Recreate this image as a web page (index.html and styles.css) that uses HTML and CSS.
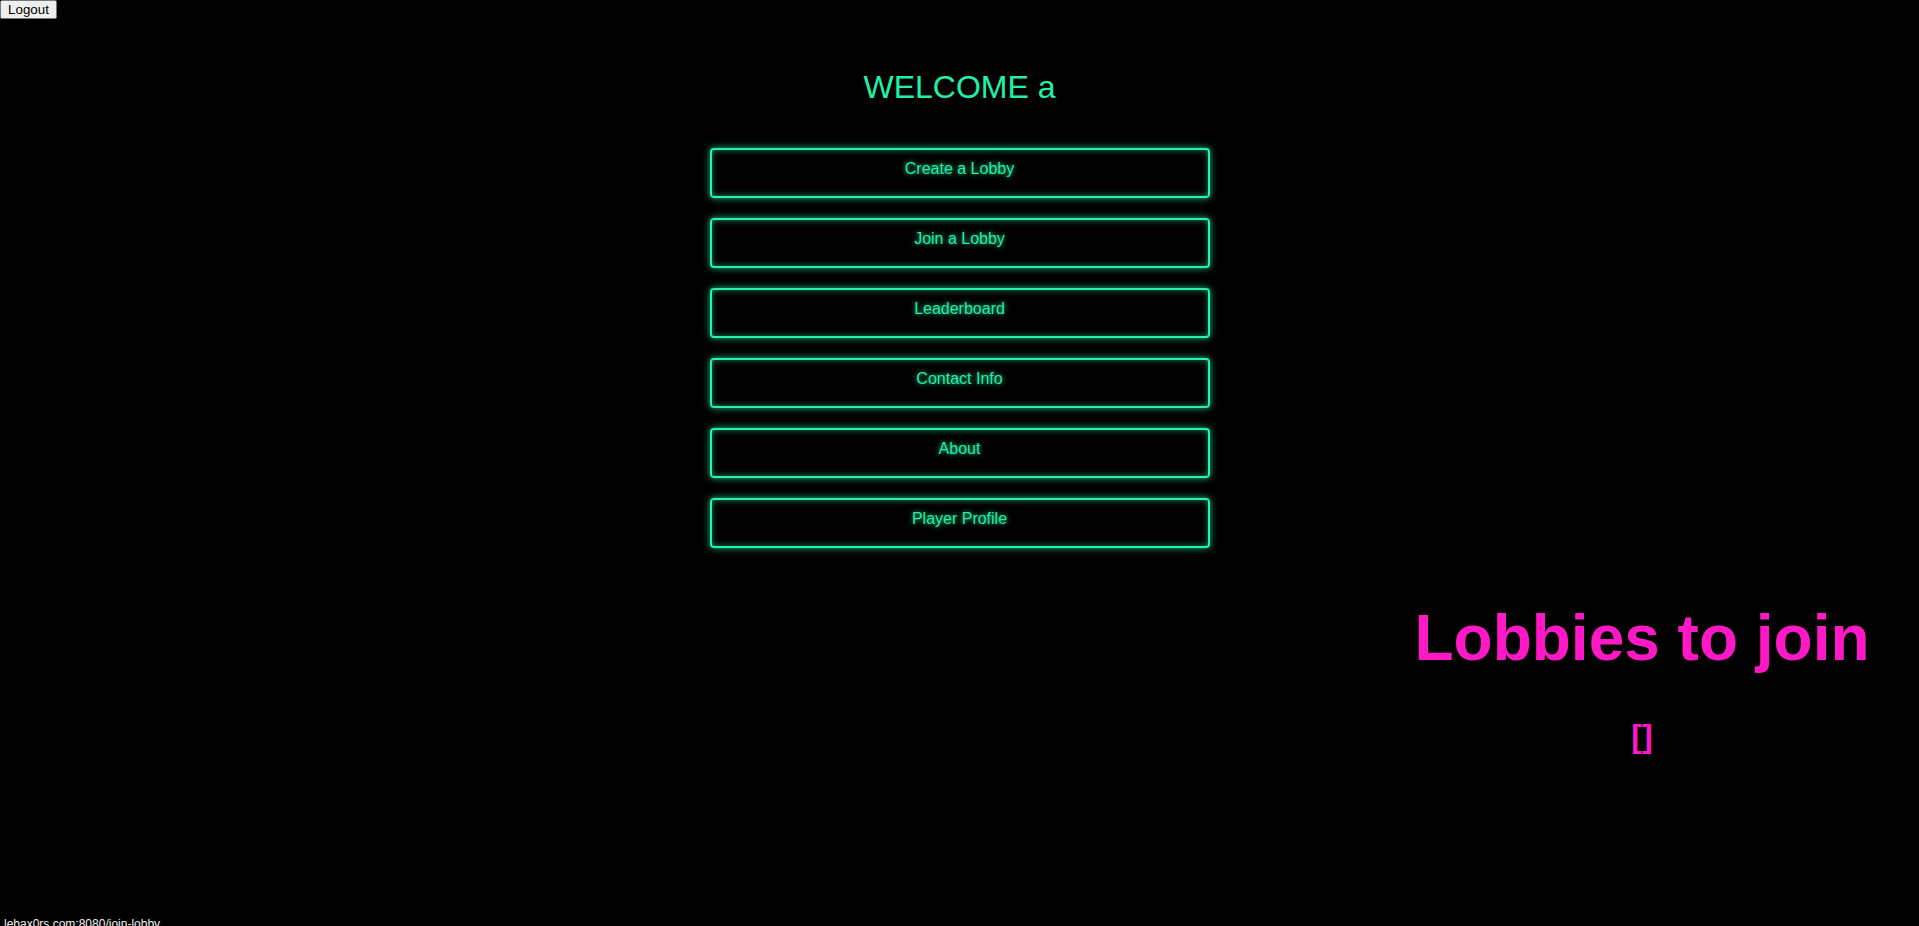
FILE: index.html
```html
<!DOCTYPE html>
<html lang="en">
<head>
<meta charset="utf-8">
<title>Lobby</title>
<link rel="stylesheet" href="styles.css">
</head>
<body>
<button class="logout">Logout</button>
<main class="menu">
  <h1 class="welcome">WELCOME a</h1>
  <nav class="menu-list">
    <a class="menu-btn" href="#">Create a Lobby</a>
    <a class="menu-btn" href="#">Join a Lobby</a>
    <a class="menu-btn" href="#">Leaderboard</a>
    <a class="menu-btn" href="#">Contact Info</a>
    <a class="menu-btn" href="#">About</a>
    <a class="menu-btn" href="#">Player Profile</a>
  </nav>
</main>
<section class="lobbies-row">
  <div class="lobbies">
    <h1 class="lobbies-title">Lobbies to join</h1>
    <p class="lobbies-list">[]</p>
  </div>
</section>
<div class="status">lebax0rs.com:8080/join-lobby</div>
</body>
</html>
```

FILE: styles.css
```css
html, body {
  margin: 0;
  padding: 0;
  background: #000;
}
body {
  font-family: "Liberation Sans", Arial, sans-serif;
  min-height: 926px;
}
.logout {
  display: block;
  box-sizing: border-box;
  height: 19px;
  width: 57px;
  margin: 0;
  padding: 0 6px;
  font-family: "Liberation Sans", Arial, sans-serif;
  font-size: 13.33px;
  color: #000;
  background: #efefef;
  border: 1px solid #767676;
  border-radius: 2px;
}
.menu {
  display: flex;
  flex-direction: column;
  align-items: center;
}
.welcome {
  margin: 50px 0 0;
  font-size: 32px;
  font-weight: normal;
  line-height: 37px;
  color: #1ef2a6;
}
.menu-list {
  display: flex;
  flex-direction: column;
  gap: 20px;
  margin-top: 42px;
  width: 500px;
}
.menu-btn {
  box-sizing: border-box;
  display: block;
  height: 50px;
  padding-top: 10px;
  border: 2px solid #22f5aa;
  border-radius: 4px;
  text-align: center;
  text-decoration: none;
  font-size: 16px;
  line-height: 18px;
  color: #22eea6;
  text-shadow: 0 0 5px rgba(30, 240, 166, 0.9);
  box-shadow: 0 0 7px rgba(30, 240, 166, 0.8), inset 0 0 6px rgba(30, 240, 166, 0.55);
}
.lobbies-row {
  display: flex;
  justify-content: flex-end;
  margin-top: 53px;
}
.lobbies {
  width: 554px;
  text-align: center;
  color: #ff19c6;
}
.lobbies-title {
  margin: 0;
  font-size: 64px;
  font-weight: bold;
  line-height: 74px;
}
.lobbies-list {
  margin: 43px 0 0;
  font-size: 32px;
  font-weight: bold;
  line-height: 37px;
}
.status {
  position: fixed;
  left: 0;
  bottom: -6px;
  padding: 0 4px;
  height: 16px;
  font-family: "Liberation Sans", Arial, sans-serif;
  font-size: 12px;
  line-height: 16px;
  color: #f0f0f0;
  background: #000;
}
```
